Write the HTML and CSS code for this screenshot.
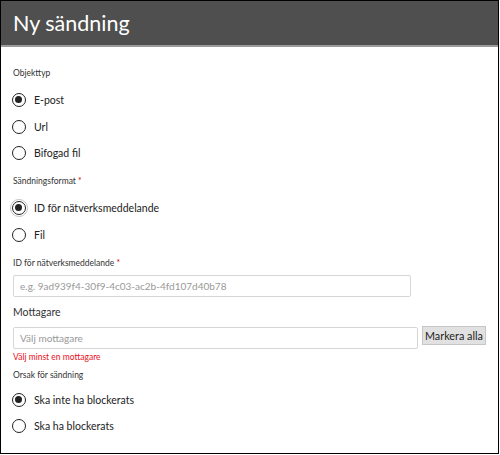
FILE: index.html
```html
<!DOCTYPE html>
<html>
<head>
<meta charset="utf-8">
<link rel="stylesheet" href="styles.css">
</head>
<body>
<div class="frame">
  <header class="header"><h1 class="title">Ny sändning</h1></header>
  <main class="content">
    <div class="label first">Objekttyp</div>
    <div class="radios">
      <div class="radio"><span class="dot checked"></span><span>E-post</span></div>
      <div class="radio"><span class="dot"></span><span>Url</span></div>
      <div class="radio"><span class="dot"></span><span>Bifogad fil</span></div>
    </div>
    <div class="label">Sändningsformat <span class="req">*</span></div>
    <div class="radios">
      <div class="radio"><span class="dot checked focus"></span><span>ID för nätverksmeddelande</span></div>
      <div class="radio"><span class="dot"></span><span>Fil</span></div>
    </div>
    <div class="label">ID för nätverksmeddelande <span class="req">*</span></div>
    <div class="input id-input">e.g. 9ad939f4-30f9-4c03-ac2b-4fd107d40b78</div>
    <div class="label big">Mottagare</div>
    <div class="row">
      <div class="input recip">Välj mottagare</div>
      <div class="button">Markera alla</div>
    </div>
    <div class="error">Välj minst en mottagare</div>
    <div class="label reason">Orsak för sändning</div>
    <div class="radios r3">
      <div class="radio"><span class="dot checked"></span><span>Ska inte ha blockerats</span></div>
      <div class="radio"><span class="dot"></span><span>Ska ha blockerats</span></div>
    </div>
  </main>
</div>
</body>
</html>
```
FILE: styles.css
```css
html, body { margin: 0; padding: 0; background: #fff; }
body { font-family: "Lato", "Noto Sans", sans-serif; color: #333; }
.frame {
  width: 497px; height: 452px;
  border: 1px solid #000;
  box-sizing: content-box;
  overflow: hidden;
}
.header {
  background: #4f4f4f;
  height: 44px;
  border-bottom: 2px solid #9a9a9a;
  display: flex; align-items: center;
  padding-left: 12px;
}
.title { margin: 0; font-size: 21.5px; font-weight: normal; color: #fff; }
.content { padding: 0 11px; }
.label { font-size: 8.5px; color: #333; margin-top: 13px; line-height: 14px; padding-left: 1px; }
.label.first { margin-top: 19px; }
.req { color: #d00; }
.radios { display: flex; flex-direction: column; gap: 10.5px; margin-top: 12px; }
.radios.r3 { margin-top: 10px; }
.radio { display: flex; align-items: center; gap: 8px; font-size: 10.5px; color: #222; height: 16px; }
.dot {
  width: 14px; height: 14px; border-radius: 50%;
  border: 1.5px solid #222; box-sizing: border-box; position: relative; flex: none;
}
.dot.checked::after {
  content: ""; position: absolute; left: 2px; top: 2px; width: 7px; height: 7px;
  border-radius: 50%; background: #222;
}
.dot.focus { outline: 1px solid #c4c4c4; outline-offset: 1px; }
.input {
  border: 1px solid #d6d6d6; border-radius: 2px;
  height: 22px; box-sizing: border-box;
  font-size: 10px; color: #999; padding-left: 6px;
  display: flex; align-items: center;
}
.id-input { width: 398px; margin-top: 5px; margin-left: 1px; }
.big { font-size: 10.5px; margin-top: 7px; color: #333; line-height: 16px; }
.row { display: flex; align-items: flex-start; gap: 4px; margin-top: 7px; margin-left: 1px; }
.recip { width: 405px; flex: none; }
.button {
  flex: none; white-space: nowrap;
  background: #e1e1e1; border: 1px solid #c6c6c6;
  font-size: 10.8px; color: #222; height: 19px; box-sizing: border-box;
  padding: 0 2px; display: flex; align-items: center; margin-top: -1px;
}
.error { color: #e81123; font-size: 8.5px; margin-top: 1px; line-height: 14px; padding-left: 1px; }
.reason { margin-top: 4px; }
```
